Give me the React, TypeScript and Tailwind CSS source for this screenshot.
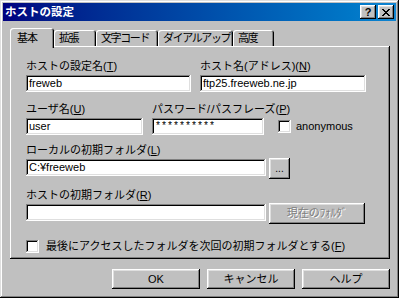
const raised =
  "shadow-[inset_-1px_-1px_#000,inset_1px_1px_#fff,inset_-2px_-2px_#808080,inset_2px_2px_#dfdfdf]";
const sunken =
  "shadow-[inset_-1px_-1px_#fff,inset_1px_1px_#808080,inset_-2px_-2px_#dfdfdf,inset_2px_2px_#000]";

const Label = ({ text, k }: { text: string; k: string }) => (
  <div className="h-[14px] leading-[14px] whitespace-nowrap">
    {text}(<u>{k}</u>)
  </div>
);

const Field = ({ className, value }: { className: string; value?: string }) => (
  <div className={`h-[17px] mt-[2px] bg-white pl-[3px] leading-[17px] whitespace-nowrap overflow-hidden shrink-0 ${sunken} ${className}`}>
    {value}
  </div>
);

const Check = () => <div className={`w-[13px] h-[13px] bg-white shrink-0 ${sunken}`} />;

const CloseGlyph = () => (
  <svg width="8" height="7" viewBox="0 0 8 7" shapeRendering="crispEdges">
    <path d="M0 0h2v1H0zM6 0h2v1H6zM1 1h2v1H1zM5 1h2v1H5zM2 2h4v1H2zM3 3h2v1H3zM2 4h4v1H2zM1 5h2v1H1zM5 5h2v1H5zM0 6h2v1H0zM6 6h2v1H6z" fill="#000" />
  </svg>
);

const tabs = [
  { name: "基本", w: "w-[44px]" },
  { name: "拡張", w: "w-[42px]" },
  { name: "文字コード", w: "w-[62px]" },
  { name: "ダイアルアップ", w: "w-[75px]" },
  { name: "高度", w: "w-[41px]" },
];

const App = () => {
  return (
    <div className={`w-[399px] h-[298px] bg-[#c0c0c0] p-[3px] text-[11px] text-black font-[family-name:'Liberation_Sans','Noto_Sans_CJK_JP',sans-serif] shadow-[inset_-1px_-1px_#000,inset_1px_1px_#dfdfdf,inset_-2px_-2px_#808080,inset_2px_2px_#fff]`}>
      {/* title bar */}
      <div className="h-[18px] flex items-center justify-between bg-gradient-to-r from-[#000080] to-[#1084d0] pl-[2px] pr-[2px]">
        <span className="text-white font-bold leading-[18px] text-[11.5px]">ホストの設定</span>
        <div className="flex gap-[1px]">
          <div className={`w-[16px] h-[14px] bg-[#c0c0c0] flex items-center justify-center font-bold text-[11px] leading-none ${raised}`}>?</div>
          <div className={`w-[16px] h-[14px] bg-[#c0c0c0] flex items-center justify-center ml-[1px] ${raised}`}>
            <CloseGlyph />
          </div>
        </div>
      </div>

      {/* tabs */}
      <div className="flex items-end mt-[7px] pl-[7px] h-[18px]">
        {tabs.map((t, i) =>
          i === 0 ? (
            <div
              key={t.name}
              className={`relative z-10 h-[20px] -mb-[2px] shrink-0 ${t.w} pl-[7px] pt-[2px] leading-[16px] whitespace-nowrap tracking-[-1px] bg-[#c0c0c0] rounded-t-[3px] shadow-[inset_1px_1px_#fff,inset_-1px_0_#000,inset_-2px_0_#808080]`}
            >
              {t.name}
            </div>
          ) : (
            <div
              key={t.name}
              className={`h-[16px] shrink-0 ${t.w} pl-[5px] leading-[16px] whitespace-nowrap tracking-[-1.4px] bg-[#c0c0c0] rounded-t-[3px] shadow-[inset_1px_1px_#fff,inset_-1px_0_#000,inset_-2px_0_#808080]`}
            >
              {t.name}
            </div>
          )
        )}
      </div>

      {/* panel */}
      <div className={`ml-[7px] w-[380px] h-[213px] pl-[16px] pt-[13px] shadow-[inset_-1px_-1px_#000,inset_1px_1px_#fff,inset_-2px_-2px_#808080]`}>
        <div className="flex">
          <div className="w-[174px] shrink-0">
            <Label text="ホストの設定名" k="T" />
            <Field className="w-[165px]" value="freweb" />
          </div>
          <div>
            <Label text="ホスト名(アドレス)" k="N" />
            <Field className="w-[166px]" value="ftp25.freeweb.ne.jp" />
          </div>
        </div>

        <div className="flex mt-[10px]">
          <div className="w-[126px] shrink-0">
            <Label text="ユーザ名" k="U" />
            <Field className="w-[117px]" value="user" />
          </div>
          <div className="w-[112px] shrink-0">
            <Label text="パスワード/パスフレーズ" k="P" />
            <div className={`h-[17px] mt-[2px] bg-white pl-[3px] leading-[17px] whitespace-nowrap overflow-hidden w-[112px] text-[10px] font-[family-name:'Liberation_Mono',monospace] ${sunken}`}>
              **********
            </div>
          </div>
          <div className="pt-[16px] pl-[14px] shrink-0">
            <div className="flex items-center h-[17px] gap-[5px]">
              <Check />
              <span>anonymous</span>
            </div>
          </div>
        </div>

        <div className="mt-[8px]">
          <Label text="ローカルの初期フォルダ" k="L" />
          <div className="flex items-start">
            <Field className="w-[240px]" value="C:¥freeweb" />
            <div className={`ml-[3px] mt-[1px] w-[21px] h-[21px] bg-[#c0c0c0] flex items-center justify-center text-[10px] leading-none ${raised}`}>...</div>
          </div>
        </div>

        <div className="mt-[9px]">
          <Label text="ホストの初期フォルダ" k="R" />
          <div className="flex items-start">
            <Field className="w-[240px]" />
            <div className={`ml-[3px] mt-[1px] w-[96px] h-[21px] bg-[#c0c0c0] flex items-center justify-center text-[#808080] [text-shadow:1px_1px_#fff] ${raised}`}>
              現在のﾌｫﾙﾀﾞ
            </div>
          </div>
        </div>

        <div className="flex items-center mt-[14px] gap-[7px]">
          <Check />
          <span className="whitespace-nowrap">
            最後にアクセスしたフォルダを次回の初期フォルダとする(<u>F</u>)
          </span>
        </div>
      </div>

      {/* buttons */}
      <div className="flex justify-end gap-[7px] mt-[10px] pr-[6px]">
        {["OK", "キャンセル", "ヘルプ"].map((b) => (
          <div key={b} className={`w-[88px] h-[20px] bg-[#c0c0c0] flex items-center justify-center ${raised}`}>
            {b}
          </div>
        ))}
      </div>
    </div>
  );
};

export default App;
